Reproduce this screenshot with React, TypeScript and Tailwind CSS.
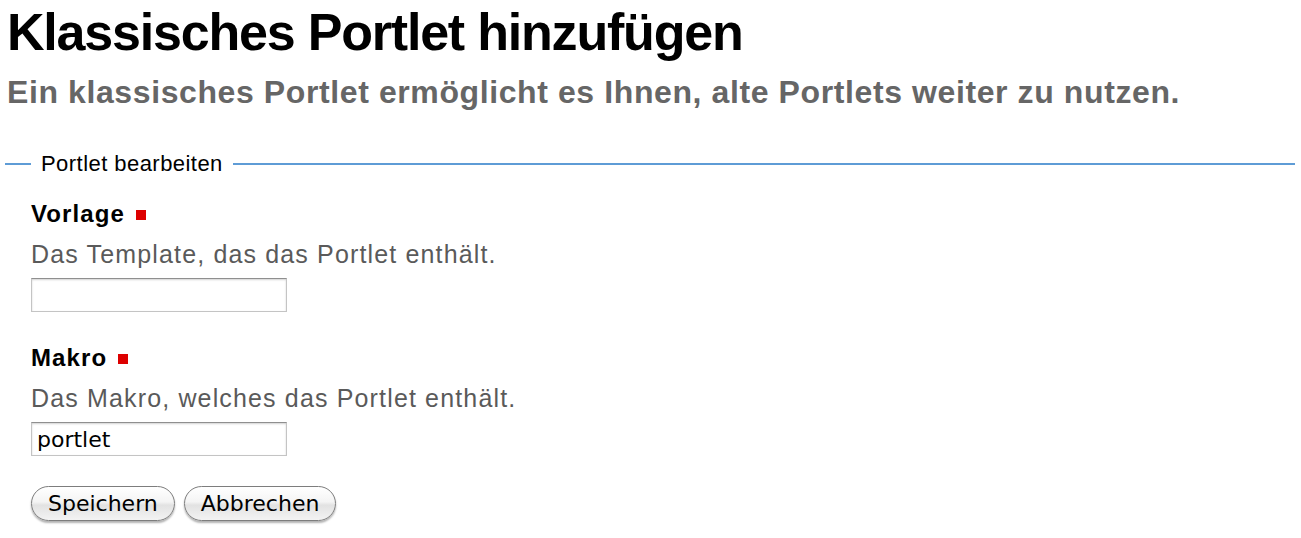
export default function App() {
  return (
    <div className="min-h-[538px] bg-white font-['Liberation_Sans',Arial,sans-serif] text-black">
      <h1 className="pl-[7px] pt-[2px] text-[52px] font-bold leading-[60px] tracking-[-1.2px]">
        Klassisches Portlet hinzufügen
      </h1>
      <p className="mt-[12px] pl-[7px] text-[32px] font-bold leading-[36px] tracking-[0.6px] text-[#666]">
        Ein klassisches Portlet ermöglicht es Ihnen, alte Portlets weiter zu nutzen.
      </p>

      <div className="mt-[42px] flex h-[24px] items-center pl-[5px] pr-[6px]">
        <div className="h-[2px] w-[26px] bg-[#5e9cd6]" />
        <span className="px-[10px] text-[22px] leading-[24px] tracking-[0.45px]">Portlet bearbeiten</span>
        <div className="h-[2px] flex-1 bg-[#5e9cd6]" />
      </div>

      <div className="mt-[24px] flex flex-col pl-[31px]">
        <Field label="Vorlage" help="Das Template, das das Portlet enthält." value="" />
        <div className="h-[32px]" />
        <Field label="Makro" help="Das Makro, welches das Portlet enthält." value="portlet" />

        <div className="mt-[30px] flex gap-[9px]">
          <AquaButton>Speichern</AquaButton>
          <AquaButton>Abbrechen</AquaButton>
        </div>
      </div>
    </div>
  );
}

function Field({ label, help, value }: { label: string; help: string; value: string }) {
  return (
    <div className="flex flex-col">
      <div className="flex h-[28px] items-center gap-[11px] text-[24px] font-bold leading-[28px] tracking-[1.1px]">
        {label}
        <span className="mt-[2px] h-[10px] w-[10px] bg-[#dd0000]" />
      </div>
      <div className="mt-[12px] text-[25px] leading-[28px] tracking-[1.15px] text-[#5a5a5a]">{help}</div>
      <input
        readOnly
        value={value}
        className="mt-[10px] h-[34px] w-[256px] border border-[#c4c4c4] border-t-[#8f8f8f] px-[5px] font-['DejaVu_Sans',sans-serif] text-[22px] text-black shadow-[inset_0_1px_2px_rgba(0,0,0,0.18)] outline-none"
      />
    </div>
  );
}

function AquaButton({ children }: { children: React.ReactNode }) {
  return (
    <button className="h-[35px] rounded-full border border-[#7d7d7d] bg-[linear-gradient(to_bottom,#ffffff_0%,#f4f4f4_45%,#e2e2e2_55%,#f3f3f3_100%)] px-[16px] font-['DejaVu_Sans',sans-serif] text-[22px] leading-[32px] text-black shadow-[0_2px_2px_rgba(0,0,0,0.3)]">
      {children}
    </button>
  );
}
